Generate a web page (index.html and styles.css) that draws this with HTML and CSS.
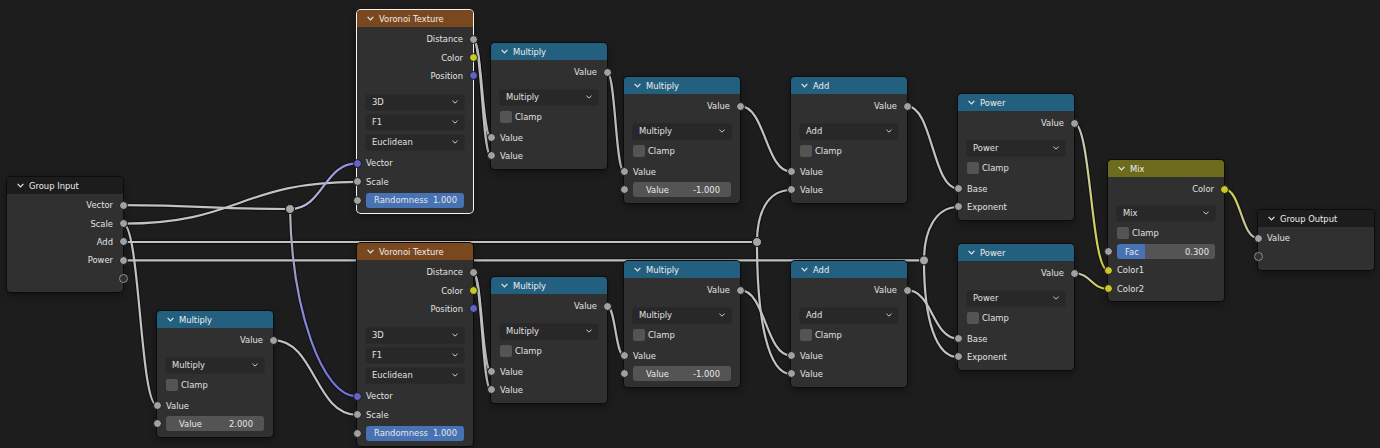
FILE: index.html
```html
<!DOCTYPE html>
<html>
<head>
<meta charset="utf-8">
<title>Node Editor</title>
<link rel="stylesheet" href="styles.css">
</head>
<body>
<div class="canvas">
  <svg class="links" width="1380" height="448" viewBox="0 0 1380 448">
    <defs>
      <linearGradient id="gpv1" gradientUnits="userSpaceOnUse" x1="290" y1="209" x2="357" y2="163">
        <stop offset="0" stop-color="#c4c4d4"/><stop offset="1" stop-color="#8a8ae6"/>
      </linearGradient>
      <linearGradient id="gpv2" gradientUnits="userSpaceOnUse" x1="290" y1="209" x2="357" y2="396">
        <stop offset="0" stop-color="#b4b4b4"/><stop offset="0.45" stop-color="#8e8ed8"/><stop offset="1" stop-color="#6f6fdc"/>
      </linearGradient>
      <linearGradient id="gy1" gradientUnits="userSpaceOnUse" x1="1074" y1="123" x2="1108" y2="270">
        <stop offset="0" stop-color="#c8c8c8"/><stop offset="1" stop-color="#d2d23c"/>
      </linearGradient>
      <linearGradient id="gy2" gradientUnits="userSpaceOnUse" x1="1074" y1="273" x2="1108" y2="289">
        <stop offset="0" stop-color="#c8c8c8"/><stop offset="1" stop-color="#d2d23c"/>
      </linearGradient>
      <linearGradient id="gy3" gradientUnits="userSpaceOnUse" x1="1224" y1="189" x2="1258" y2="238">
        <stop offset="0" stop-color="#d2d23c"/><stop offset="1" stop-color="#c0c0c0"/>
      </linearGradient>
      <path id="l1" d="M123,205.2 C206,205.2 206,209 290,209"/>
      <path id="l2" d="M290,209 C323.5,209 323.5,163.4 357,163.4"/>
      <path id="l3" d="M290,209 C292,310 322,396.4 357,396.4"/>
      <path id="l4" d="M123,223.6 C240,223.6 240,181.8 357,181.8"/>
      <path id="l5" d="M123,223.6 C140,223.6 140,405.6 157,405.6"/>
      <path id="l6" d="M273,340.2 C315,340.2 315,414.8 357,414.8"/>
      <path id="l7" d="M123,242 L757,242"/>
      <path id="l8" d="M757,242 C757,212 768,190 791,190"/>
      <path id="l9" d="M757,242 C757,320 768,374 791,374"/>
      <path id="l10" d="M123,260.4 L924,260.4"/>
      <path id="l11" d="M924,260.4 C924,230 936,207 958,207"/>
      <path id="l12" d="M924,260.4 C924,320 936,357 958,357"/>
      <path id="l13" d="M473,39.2 C482,39.2 482,137.6 491,137.6"/>
      <path id="l14" d="M473,39.2 C482,39.2 482,156 491,156"/>
      <path id="l15" d="M473,272.2 C482,272.2 482,371.6 491,371.6"/>
      <path id="l16" d="M473,272.2 C482,272.2 482,390 491,390"/>
      <path id="l17" d="M607,72.2 C615.5,72.2 615.5,171.6 624,171.6"/>
      <path id="l18" d="M607,306.2 C615.5,306.2 615.5,355.6 624,355.6"/>
      <path id="l19" d="M740,106.2 C765.5,106.2 765.5,171.6 791,171.6"/>
      <path id="l20" d="M740,290.2 C765.5,290.2 765.5,355.6 791,355.6"/>
      <path id="l21" d="M907,106.2 C932.5,106.2 932.5,188.6 958,188.6"/>
      <path id="l22" d="M907,290.2 C932.5,290.2 932.5,338.6 958,338.6"/>
      <path id="l23" d="M1074,123.2 C1091,123.2 1091,270.4 1108,270.4"/>
      <path id="l24" d="M1074,273.2 C1091,273.2 1091,288.8 1108,288.8"/>
      <path id="l25" d="M1224,189.2 C1241,189.2 1241,238.2 1258,238.2"/>
    </defs>
    <g class="ol">
      <use href="#l1"/><use href="#l2"/><use href="#l3"/><use href="#l4"/><use href="#l5"/>
      <use href="#l6"/><use href="#l7"/><use href="#l8"/><use href="#l9"/><use href="#l10"/>
      <use href="#l11"/><use href="#l12"/><use href="#l13"/><use href="#l14"/><use href="#l15"/>
      <use href="#l16"/><use href="#l17"/><use href="#l18"/><use href="#l19"/><use href="#l20"/>
      <use href="#l21"/><use href="#l22"/><use href="#l23"/><use href="#l24"/><use href="#l25"/>
    </g>
    <g class="core">
      <use href="#l1"/><use href="#l4"/><use href="#l5"/>
      <use href="#l6"/><use href="#l7"/><use href="#l8"/><use href="#l9"/><use href="#l10"/>
      <use href="#l11"/><use href="#l12"/><use href="#l13"/><use href="#l14"/><use href="#l15"/>
      <use href="#l16"/><use href="#l17"/><use href="#l18"/><use href="#l19"/><use href="#l20"/>
      <use href="#l21"/><use href="#l22"/>
      <use href="#l2" class="gpv1"/><use href="#l3" class="gpv2"/>
      <use href="#l23" class="gy1"/><use href="#l24" class="gy2"/><use href="#l25" class="gy3"/>
    </g>
    <g class="reroute">
      <circle cx="290" cy="209" r="4.5"/>
      <circle cx="757" cy="242" r="4.5"/>
      <circle cx="924" cy="260.4" r="4.5"/>
    </g>
  </svg>

  <!-- Group Input -->
  <div class="node grp n-gi">
    <div class="hdr h-grp"><svg class="chev" viewBox="0 0 7 5"><path d="M0.6 0.8 L3.5 3.8 L6.4 0.8"/></svg><span>Group Input</span></div>
    <div class="body">
      <div class="row out"><span>Vector</span><i class="sock"></i></div>
      <div class="row out"><span>Scale</span><i class="sock"></i></div>
      <div class="row out"><span>Add</span><i class="sock"></i></div>
      <div class="row out"><span>Power</span><i class="sock"></i></div>
      <div class="row out"><i class="sock e"></i></div>
    </div>
  </div>

  <!-- Voronoi top -->
  <div class="node vor sel n-vt">
    <div class="hdr h-tex"><svg class="chev" viewBox="0 0 7 5"><path d="M0.6 0.8 L3.5 3.8 L6.4 0.8"/></svg><span>Voronoi Texture</span></div>
    <div class="body">
      <div class="outs">
        <div class="row out"><span>Distance</span><i class="sock"></i></div>
        <div class="row out"><span>Color</span><i class="sock y"></i></div>
        <div class="row out"><span>Position</span><i class="sock v"></i></div>
      </div>
      <div class="wids">
        <div class="wrow"><div class="dd"><span>3D</span><svg class="ddc" viewBox="0 0 7 4"><path d="M0.5 0.5 L3.5 3.3 L6.5 0.5"/></svg></div></div>
        <div class="wrow"><div class="dd"><span>F1</span><svg class="ddc" viewBox="0 0 7 4"><path d="M0.5 0.5 L3.5 3.3 L6.5 0.5"/></svg></div></div>
        <div class="wrow"><div class="dd"><span>Euclidean</span><svg class="ddc" viewBox="0 0 7 4"><path d="M0.5 0.5 L3.5 3.3 L6.5 0.5"/></svg></div></div>
      </div>
      <div class="ins">
        <div class="row in"><i class="sock v"></i><span>Vector</span></div>
        <div class="row in"><i class="sock"></i><span>Scale</span></div>
        <div class="row in fld"><i class="sock"></i><div class="num slider"><span>Randomness</span><span>1.000</span></div></div>
      </div>
    </div>
  </div>

  <!-- Voronoi bottom -->
  <div class="node vor n-vb">
    <div class="hdr h-tex"><svg class="chev" viewBox="0 0 7 5"><path d="M0.6 0.8 L3.5 3.8 L6.4 0.8"/></svg><span>Voronoi Texture</span></div>
    <div class="body">
      <div class="outs">
        <div class="row out"><span>Distance</span><i class="sock"></i></div>
        <div class="row out"><span>Color</span><i class="sock y"></i></div>
        <div class="row out"><span>Position</span><i class="sock v"></i></div>
      </div>
      <div class="wids">
        <div class="wrow"><div class="dd"><span>3D</span><svg class="ddc" viewBox="0 0 7 4"><path d="M0.5 0.5 L3.5 3.3 L6.5 0.5"/></svg></div></div>
        <div class="wrow"><div class="dd"><span>F1</span><svg class="ddc" viewBox="0 0 7 4"><path d="M0.5 0.5 L3.5 3.3 L6.5 0.5"/></svg></div></div>
        <div class="wrow"><div class="dd"><span>Euclidean</span><svg class="ddc" viewBox="0 0 7 4"><path d="M0.5 0.5 L3.5 3.3 L6.5 0.5"/></svg></div></div>
      </div>
      <div class="ins">
        <div class="row in"><i class="sock v"></i><span>Vector</span></div>
        <div class="row in"><i class="sock"></i><span>Scale</span></div>
        <div class="row in fld"><i class="sock"></i><div class="num slider"><span>Randomness</span><span>1.000</span></div></div>
      </div>
    </div>
  </div>

  <!-- Multiply A top -->
  <div class="node n-mat">
    <div class="hdr h-conv"><svg class="chev" viewBox="0 0 7 5"><path d="M0.6 0.8 L3.5 3.8 L6.4 0.8"/></svg><span>Multiply</span></div>
    <div class="body">
      <div class="outs"><div class="row out"><span>Value</span><i class="sock"></i></div></div>
      <div class="wids">
        <div class="wrow"><div class="dd"><span>Multiply</span><svg class="ddc" viewBox="0 0 7 4"><path d="M0.5 0.5 L3.5 3.3 L6.5 0.5"/></svg></div></div>
        <div class="wrow"><i class="cb"></i><span>Clamp</span></div>
      </div>
      <div class="ins">
        <div class="row in"><i class="sock"></i><span>Value</span></div>
        <div class="row in"><i class="sock"></i><span>Value</span></div>
      </div>
    </div>
  </div>

  <!-- Multiply A bottom -->
  <div class="node n-mab">
    <div class="hdr h-conv"><svg class="chev" viewBox="0 0 7 5"><path d="M0.6 0.8 L3.5 3.8 L6.4 0.8"/></svg><span>Multiply</span></div>
    <div class="body">
      <div class="outs"><div class="row out"><span>Value</span><i class="sock"></i></div></div>
      <div class="wids">
        <div class="wrow"><div class="dd"><span>Multiply</span><svg class="ddc" viewBox="0 0 7 4"><path d="M0.5 0.5 L3.5 3.3 L6.5 0.5"/></svg></div></div>
        <div class="wrow"><i class="cb"></i><span>Clamp</span></div>
      </div>
      <div class="ins">
        <div class="row in"><i class="sock"></i><span>Value</span></div>
        <div class="row in"><i class="sock"></i><span>Value</span></div>
      </div>
    </div>
  </div>

  <!-- Multiply B top -->
  <div class="node n-mbt">
    <div class="hdr h-conv"><svg class="chev" viewBox="0 0 7 5"><path d="M0.6 0.8 L3.5 3.8 L6.4 0.8"/></svg><span>Multiply</span></div>
    <div class="body">
      <div class="outs"><div class="row out"><span>Value</span><i class="sock"></i></div></div>
      <div class="wids">
        <div class="wrow"><div class="dd"><span>Multiply</span><svg class="ddc" viewBox="0 0 7 4"><path d="M0.5 0.5 L3.5 3.3 L6.5 0.5"/></svg></div></div>
        <div class="wrow"><i class="cb"></i><span>Clamp</span></div>
      </div>
      <div class="ins">
        <div class="row in"><i class="sock"></i><span>Value</span></div>
        <div class="row in fld"><i class="sock"></i><div class="num"><span>Value</span><span>-1.000</span></div></div>
      </div>
    </div>
  </div>

  <!-- Multiply B bottom -->
  <div class="node n-mbb">
    <div class="hdr h-conv"><svg class="chev" viewBox="0 0 7 5"><path d="M0.6 0.8 L3.5 3.8 L6.4 0.8"/></svg><span>Multiply</span></div>
    <div class="body">
      <div class="outs"><div class="row out"><span>Value</span><i class="sock"></i></div></div>
      <div class="wids">
        <div class="wrow"><div class="dd"><span>Multiply</span><svg class="ddc" viewBox="0 0 7 4"><path d="M0.5 0.5 L3.5 3.3 L6.5 0.5"/></svg></div></div>
        <div class="wrow"><i class="cb"></i><span>Clamp</span></div>
      </div>
      <div class="ins">
        <div class="row in"><i class="sock"></i><span>Value</span></div>
        <div class="row in fld"><i class="sock"></i><div class="num"><span>Value</span><span>-1.000</span></div></div>
      </div>
    </div>
  </div>

  <!-- Add top -->
  <div class="node n-aat">
    <div class="hdr h-conv"><svg class="chev" viewBox="0 0 7 5"><path d="M0.6 0.8 L3.5 3.8 L6.4 0.8"/></svg><span>Add</span></div>
    <div class="body">
      <div class="outs"><div class="row out"><span>Value</span><i class="sock"></i></div></div>
      <div class="wids">
        <div class="wrow"><div class="dd"><span>Add</span><svg class="ddc" viewBox="0 0 7 4"><path d="M0.5 0.5 L3.5 3.3 L6.5 0.5"/></svg></div></div>
        <div class="wrow"><i class="cb"></i><span>Clamp</span></div>
      </div>
      <div class="ins">
        <div class="row in"><i class="sock"></i><span>Value</span></div>
        <div class="row in"><i class="sock"></i><span>Value</span></div>
      </div>
    </div>
  </div>

  <!-- Add bottom -->
  <div class="node n-aab">
    <div class="hdr h-conv"><svg class="chev" viewBox="0 0 7 5"><path d="M0.6 0.8 L3.5 3.8 L6.4 0.8"/></svg><span>Add</span></div>
    <div class="body">
      <div class="outs"><div class="row out"><span>Value</span><i class="sock"></i></div></div>
      <div class="wids">
        <div class="wrow"><div class="dd"><span>Add</span><svg class="ddc" viewBox="0 0 7 4"><path d="M0.5 0.5 L3.5 3.3 L6.5 0.5"/></svg></div></div>
        <div class="wrow"><i class="cb"></i><span>Clamp</span></div>
      </div>
      <div class="ins">
        <div class="row in"><i class="sock"></i><span>Value</span></div>
        <div class="row in"><i class="sock"></i><span>Value</span></div>
      </div>
    </div>
  </div>

  <!-- Power top -->
  <div class="node n-pt">
    <div class="hdr h-conv"><svg class="chev" viewBox="0 0 7 5"><path d="M0.6 0.8 L3.5 3.8 L6.4 0.8"/></svg><span>Power</span></div>
    <div class="body">
      <div class="outs"><div class="row out"><span>Value</span><i class="sock"></i></div></div>
      <div class="wids">
        <div class="wrow"><div class="dd"><span>Power</span><svg class="ddc" viewBox="0 0 7 4"><path d="M0.5 0.5 L3.5 3.3 L6.5 0.5"/></svg></div></div>
        <div class="wrow"><i class="cb"></i><span>Clamp</span></div>
      </div>
      <div class="ins">
        <div class="row in"><i class="sock"></i><span>Base</span></div>
        <div class="row in"><i class="sock"></i><span>Exponent</span></div>
      </div>
    </div>
  </div>

  <!-- Power bottom -->
  <div class="node n-pb">
    <div class="hdr h-conv"><svg class="chev" viewBox="0 0 7 5"><path d="M0.6 0.8 L3.5 3.8 L6.4 0.8"/></svg><span>Power</span></div>
    <div class="body">
      <div class="outs"><div class="row out"><span>Value</span><i class="sock"></i></div></div>
      <div class="wids">
        <div class="wrow"><div class="dd"><span>Power</span><svg class="ddc" viewBox="0 0 7 4"><path d="M0.5 0.5 L3.5 3.3 L6.5 0.5"/></svg></div></div>
        <div class="wrow"><i class="cb"></i><span>Clamp</span></div>
      </div>
      <div class="ins">
        <div class="row in"><i class="sock"></i><span>Base</span></div>
        <div class="row in"><i class="sock"></i><span>Exponent</span></div>
      </div>
    </div>
  </div>

  <!-- Mix -->
  <div class="node mix n-mix">
    <div class="hdr h-col"><svg class="chev" viewBox="0 0 7 5"><path d="M0.6 0.8 L3.5 3.8 L6.4 0.8"/></svg><span>Mix</span></div>
    <div class="body">
      <div class="outs"><div class="row out"><span>Color</span><i class="sock y"></i></div></div>
      <div class="wids">
        <div class="wrow"><div class="dd"><span>Mix</span><svg class="ddc" viewBox="0 0 7 4"><path d="M0.5 0.5 L3.5 3.3 L6.5 0.5"/></svg></div></div>
        <div class="wrow short"><i class="cb"></i><span>Clamp</span></div>
      </div>
      <div class="ins">
        <div class="row in fld"><i class="sock"></i><div class="num fac"><span>Fac</span><span>0.300</span></div></div>
        <div class="row in"><i class="sock y"></i><span>Color1</span></div>
        <div class="row in"><i class="sock y"></i><span>Color2</span></div>
      </div>
    </div>
  </div>

  <!-- Group Output -->
  <div class="node grp n-go">
    <div class="hdr h-grp"><svg class="chev" viewBox="0 0 7 5"><path d="M0.6 0.8 L3.5 3.8 L6.4 0.8"/></svg><span>Group Output</span></div>
    <div class="body">
      <div class="row in"><i class="sock"></i><span>Value</span></div>
      <div class="row in"><i class="sock e"></i></div>
    </div>
  </div>

  <!-- Multiply C -->
  <div class="node n-mc">
    <div class="hdr h-conv"><svg class="chev" viewBox="0 0 7 5"><path d="M0.6 0.8 L3.5 3.8 L6.4 0.8"/></svg><span>Multiply</span></div>
    <div class="body">
      <div class="outs"><div class="row out"><span>Value</span><i class="sock"></i></div></div>
      <div class="wids">
        <div class="wrow"><div class="dd"><span>Multiply</span><svg class="ddc" viewBox="0 0 7 4"><path d="M0.5 0.5 L3.5 3.3 L6.5 0.5"/></svg></div></div>
        <div class="wrow"><i class="cb"></i><span>Clamp</span></div>
      </div>
      <div class="ins">
        <div class="row in"><i class="sock"></i><span>Value</span></div>
        <div class="row in fld"><i class="sock"></i><div class="num"><span>Value</span><span>2.000</span></div></div>
      </div>
    </div>
  </div>
</div>
</body>
</html>
```

FILE: styles.css
```css
* { box-sizing: border-box; margin: 0; padding: 0; }

html, body { background: #1d1d1d; }

body {
  width: 1380px;
  height: 448px;
  overflow: hidden;
  font-family: "DejaVu Sans", "Noto Sans", sans-serif;
  font-size: 8.4px;
  color: #e2e2e2;
}

.canvas {
  position: relative;
  width: 1380px;
  height: 448px;
  background: #1d1d1d;
  overflow: hidden;
}

/* ---------- links ---------- */
.links { position: absolute; left: 0; top: 0; }
.links .ol use { fill: none; stroke: #0e0e0e; stroke-width: 4.4; stroke-opacity: 0.75; }
.links .core use { fill: none; stroke: #c2c2c2; stroke-width: 2.2; }
.links .core use.gpv1 { stroke: url(#gpv1); }
.links .core use.gpv2 { stroke: url(#gpv2); }
.links .core use.gy1 { stroke: url(#gy1); }
.links .core use.gy2 { stroke: url(#gy2); }
.links .core use.gy3 { stroke: url(#gy3); }
.links .reroute circle { fill: #a6a6a6; stroke: #151515; stroke-width: 1; }

/* ---------- nodes ---------- */
.node {
  position: absolute;
  width: 116px;
  background: #303030;
  border-radius: 4px;
  box-shadow: 0 0 0 1px #0c0c0c, 0 3px 8px rgba(0, 0, 0, 0.45);
}
.node.sel { box-shadow: 0 0 0 1px #f4f4f4, 0 3px 8px rgba(0, 0, 0, 0.45); }

.n-gi  { left: 7px;    top: 177px; }
.n-vt  { left: 357px;  top: 10px; }
.n-vb  { left: 357px;  top: 243px; }
.n-mat { left: 491px;  top: 43px; }
.n-mab { left: 491px;  top: 277px; }
.n-mbt { left: 624px;  top: 77px; }
.n-mbb { left: 624px;  top: 261px; }
.n-aat { left: 791px;  top: 77px; }
.n-aab { left: 791px;  top: 261px; }
.n-pt  { left: 958px;  top: 94px; }
.n-pb  { left: 958px;  top: 244px; }
.n-mix { left: 1108px; top: 160px; }
.n-go  { left: 1258px; top: 210px; }
.n-mc  { left: 157px;  top: 311px; }

.hdr {
  height: 17px;
  display: flex;
  align-items: center;
  padding-left: 10px;
  border-radius: 4px 4px 0 0;
  color: #eeeeee;
  white-space: nowrap;
}
.h-grp  { background: #1c1c1c; }
.h-tex  { background: #7a481f; }
.h-conv { background: #23607f; }
.h-col  { background: #6c6b1e; }

.chev {
  width: 7px;
  height: 5px;
  margin-right: 5px;
  fill: none;
  stroke: #e6e6e6;
  stroke-width: 1.2;
}

.body { padding: 3px 0 4px; }
.grp .body { padding-top: 2px; }

.row {
  position: relative;
  height: 18.4px;
  display: flex;
  align-items: center;
  padding: 0 10px 0 9px;
  white-space: nowrap;
}
.row.out { justify-content: flex-end; }
.row.fld { padding: 0 9px; }

.wids { margin-top: 6px; }
.ins { margin-top: 1px; }
.vor .wids { margin-top: 7px; }
.vor .ins { margin-top: 2px; }
.mix .wids { margin-top: 5px; }
.mix .body { padding-bottom: 3px; }

.wrow {
  height: 20px;
  display: flex;
  align-items: center;
  padding: 0 9px;
  white-space: nowrap;
}
.wrow.short { height: 18.4px; }

/* sockets */
.sock {
  position: absolute;
  top: 50%;
  width: 9px;
  height: 9px;
  margin-top: -4.5px;
  border-radius: 50%;
  background: #a1a1a1;
  border: 1px solid #161616;
}
.out .sock { right: -4.5px; }
.in .sock { left: -4.5px; }
.sock.y { background: #c7c729; }
.sock.v { background: #6363c7; }
.sock.e { background: #303030; border-color: #8c8c8c; }

/* dropdown */
.dd {
  flex: 1;
  height: 15px;
  background: #282828;
  border-radius: 3px;
  display: flex;
  align-items: center;
  justify-content: space-between;
  padding: 0 6px 0 6px;
  color: #e0e0e0;
  box-shadow: 0 0 0 1px #2a2a2a;
}
.ddc {
  width: 6px;
  height: 4px;
  fill: none;
  stroke: #d4d4d4;
  stroke-width: 1.1;
}

/* checkbox */
.cb {
  width: 12px;
  height: 12px;
  background: #545454;
  border-radius: 2px;
  margin-right: 3px;
  flex: none;
}

/* number fields */
.num {
  flex: 1;
  height: 15px;
  background: #545454;
  border-radius: 3px;
  display: flex;
  align-items: center;
  justify-content: space-between;
  padding: 0 11px 0 13px;
  color: #e8e8e8;
}
.num.slider { background: #4772b3; padding: 0 7px 0 8px; }
.num.fac {
  background: linear-gradient(90deg, #4772b3 0, #4772b3 29%, #545454 29%, #545454 100%);
  padding: 0 6px 0 8px;
}
```
